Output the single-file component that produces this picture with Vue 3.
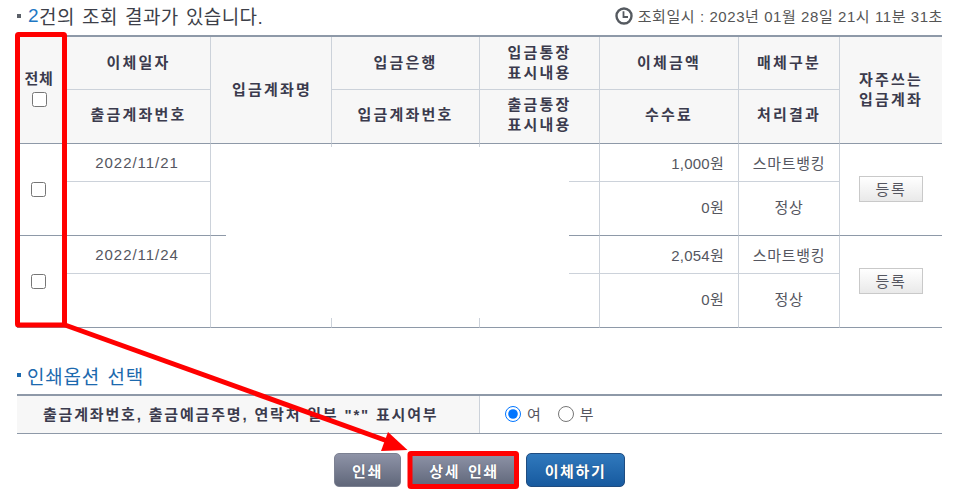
<script setup>
const rows = [
  { date: '2022/11/21', amount: '1,000원', fee: '0원' },
  { date: '2022/11/24', amount: '2,054원', fee: '0원' }
]
</script>

<template>
  <div class="page">
    <div class="top">
      <h2 class="title"><i class="dot"></i><b>2</b>건의 조회 결과가 있습니다.</h2>
      <div class="when">
        <svg class="clock" viewBox="0 0 18 18" width="18" height="18">
          <circle cx="9" cy="9" r="7.5" fill="#fff" stroke="#555a60" stroke-width="2.4" />
          <path d="M8.5 4.2V10H13" fill="none" stroke="#555a60" stroke-width="1.8" />
        </svg>
        <span>조회일시 : 2023년 01월 28일 21시 11분 31초</span>
      </div>
    </div>

    <table class="grid">
      <colgroup>
        <col class="c1" /><col class="c2" /><col class="c3" /><col class="c4" />
        <col class="c5" /><col class="c6" /><col class="c7" /><col class="c8" />
      </colgroup>
      <thead>
        <tr class="h1">
          <th rowspan="2" class="all">전체<input type="checkbox" class="check" /></th>
          <th>이체일자</th>
          <th rowspan="2" class="name">입금계좌명</th>
          <th>입금은행</th>
          <th>입금통장<br />표시내용</th>
          <th>이체금액</th>
          <th>매체구분</th>
          <th rowspan="2" class="last">자주쓰는<br />입금계좌</th>
        </tr>
        <tr class="h2">
          <th>출금계좌번호</th>
          <th>입금계좌번호</th>
          <th>출금통장<br />표시내용</th>
          <th>수수료</th>
          <th>처리결과</th>
        </tr>
      </thead>
      <tbody>
        <template v-for="row in rows" :key="row.date">
          <tr class="r1">
            <td rowspan="2" class="strong"><input type="checkbox" class="check" /></td>
            <td class="light date">{{ row.date }}</td>
            <td rowspan="2" class="strong"></td>
            <td class="light"></td>
            <td class="light"></td>
            <td class="light num">{{ row.amount }}</td>
            <td class="light">스마트뱅킹</td>
            <td rowspan="2" class="strong last"><button class="reg">등록</button></td>
          </tr>
          <tr class="r2">
            <td class="strong"></td>
            <td class="strong"></td>
            <td class="strong"></td>
            <td class="strong num lift">{{ row.fee }}</td>
            <td class="strong lift">정상</td>
          </tr>
        </template>
      </tbody>
    </table>

    <h3 class="section"><i class="dot blue"></i>인쇄옵션 선택</h3>
    <div class="option">
      <div class="opt-label">출금계좌번호, 출금예금주명, 연락처 일부 "*" 표시여부</div>
      <div class="opt-value">
        <label class="radio"><input type="radio" name="mask" checked />여</label>
        <label class="radio"><input type="radio" name="mask" />부</label>
      </div>
    </div>

    <div class="actions">
      <button class="btn gray small">인쇄</button>
      <button class="btn gray mid">상세 인쇄</button>
      <button class="btn blue-btn wide">이체하기</button>
    </div>

    <div class="erase"></div>
    <svg class="marks" viewBox="0 0 963 499" width="963" height="499">
      <rect x="17.5" y="34.5" width="47" height="290.5" rx="1" fill="none" stroke="#ff0000" stroke-width="5" />
      <rect x="410" y="453.5" width="106.5" height="33" rx="1" fill="none" stroke="#ff0000" stroke-width="5" />
      <path d="M65 325 L393 443" fill="none" stroke="#ff0000" stroke-width="5" />
      <polygon points="407.5,450 388,432 381,451" fill="#ff0000" />
    </svg>
  </div>
</template>

<style scoped>
.page {
  position: relative;
  width: 963px;
  height: 499px;
  overflow: hidden;
  box-sizing: border-box;
  padding: 0 21px 0 17px;
  background: #fff;
  font-family: "Liberation Sans", "Noto Sans CJK KR", sans-serif;
  color: #444654;
}
.top {
  display: flex;
  justify-content: space-between;
  align-items: center;
  height: 35px;
  box-sizing: border-box;
  padding-bottom: 4px;
}
.title {
  margin: 0;
  display: flex;
  align-items: center;
  font-size: 19px;
  font-weight: 400;
  color: #3d3f49;
  letter-spacing: 0.42px;
  word-spacing: 1.5px;
  white-space: pre;
}
.title b {
  font-weight: 400;
  color: #1f78c4;
}
.dot {
  width: 4px;
  height: 4px;
  background: #5b6068;
  margin-right: 7px;
}
.when {
  display: flex;
  align-items: center;
  gap: 4px;
  font-size: 15px;
  color: #555;
  letter-spacing: 0.57px;
  margin-right: -1px;
  white-space: nowrap;
}
.clock { margin-right: 1px; }
.grid {
  width: 925px;
  table-layout: fixed;
  border-collapse: separate;
  border-spacing: 0;
  border-top: 2px solid #8e99a8;
}
.c1 { width: 50px; }
.c2 { width: 144px; }
.c3 { width: 121px; }
.c4 { width: 148px; }
.c5 { width: 120px; }
.c6 { width: 139px; }
.c7 { width: 101px; }
.c8 { width: 102px; }
th, td {
  padding: 0;
  box-sizing: border-box;
  text-align: center;
  border-right: 1px solid #ccd2da;
  border-bottom: 1px solid #ccd2da;
}
th {
  background: #f7f7f7;
  font-size: 15px;
  font-weight: 700;
  letter-spacing: 2.2px;
  color: #3b3b4d;
  line-height: 20px;
}
thead .h1 { height: 53px; }
thead .h2 { height: 54px; }
thead .h2 th {
  padding-bottom: 3px;
  border-bottom-color: #8e99a8;
}
thead th[rowspan] {
  padding-bottom: 0;
  border-bottom-color: #8e99a8;
}
thead th.name { padding-left: 2px; }
.all {
  letter-spacing: 0.6px;
  line-height: 18px;
  padding-right: 5px;
}
thead th.all { padding-bottom: 3px; }
.check {
  display: block;
  width: 15px;
  height: 15px;
  margin: 4px auto 0;
}
.grid td .check {
  margin: 0 auto;
  position: relative;
  left: -3px;
}
.last { border-right: none; }
td {
  font-size: 15px;
  letter-spacing: 0.7px;
  color: #555660;
}
.date {
  letter-spacing: 0.95px;
  padding-right: 3px;
}
.r1 { height: 38px; }
.r2 { height: 54px; }
td.strong { border-bottom-color: #8e99a8; }
td.lift { padding-bottom: 5px; }
td.num {
  text-align: right;
  padding-right: 14px;
  letter-spacing: 0.25px;
}
.reg {
  width: 64px;
  height: 26px;
  padding: 0;
  margin-top: -2px;
  border: 1px solid #c9c9c9;
  background: linear-gradient(#ffffff, #e9e9e9);
  font: inherit;
  letter-spacing: 1.6px;
  color: #555660;
}
.section {
  margin: 28px 0 0;
  height: 38px;
  display: flex;
  align-items: center;
  font-size: 19px;
  font-weight: 400;
  letter-spacing: 0.75px;
  word-spacing: 1.5px;
  color: #1c69ae;
}
.dot.blue {
  background: #1c69ae;
  margin-right: 6px;
}
.option {
  display: flex;
  height: 40px;
  box-sizing: border-box;
  border-top: 2px solid #8e99a8;
  border-bottom: 1px solid #8e99a8;
}
.opt-label {
  width: 463px;
  box-sizing: border-box;
  display: flex;
  align-items: center;
  padding: 0 0 3px 26px;
  background: #f7f7f7;
  border-right: 1px solid #ccd2da;
  font-size: 15px;
  font-weight: 700;
  letter-spacing: 1.82px;
  color: #3b3b4d;
  white-space: nowrap;
}
.opt-value {
  display: flex;
  align-items: center;
  gap: 17px;
  padding: 0 0 2px 25px;
  font-size: 15px;
  color: #555660;
}
.radio {
  display: flex;
  align-items: center;
  gap: 6px;
}
.radio input {
  width: 16px;
  height: 16px;
  margin: 0;
}
.actions {
  display: flex;
  justify-content: center;
  gap: 7px;
  margin-top: 19px;
}
.btn {
  height: 34px;
  padding: 0;
  border-radius: 5px;
  font-family: inherit;
  font-size: 15px;
  font-weight: 700;
  letter-spacing: 1.6px;
  word-spacing: 2px;
  color: #fff;
  text-shadow: 0 0 1px rgba(40, 40, 60, 0.6);
}
.gray {
  border: 1px solid #7c8192;
  background: linear-gradient(#8e93a7, #60677a);
}
.blue-btn {
  border: 1px solid #1f4c80;
  background: linear-gradient(#3079bd, #175a9f);
}
.small { width: 67px; }
.mid { width: 110px; margin-left: 1px; }
.wide { width: 99px; }
.erase {
  position: absolute;
  left: 226px;
  top: 147px;
  width: 343px;
  height: 171px;
  background: #fff;
}
.marks {
  position: absolute;
  left: 0;
  top: 0;
  pointer-events: none;
}
</style>
